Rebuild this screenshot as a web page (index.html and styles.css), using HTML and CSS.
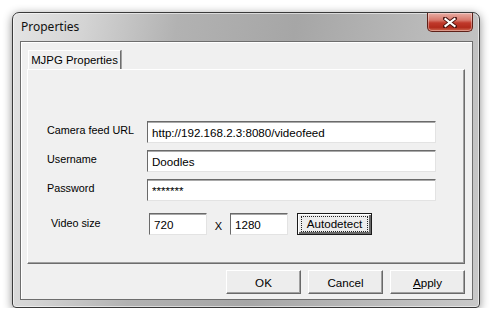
FILE: index.html
```html
<!DOCTYPE html>
<html lang="en">
<head>
    <meta charset="UTF-8">
    <title>Properties</title>
    <link rel="stylesheet" href="styles.css">
</head>
<body>

<div class="window">
    <div class="titlebar">
        <span class="title">Properties</span>
        <button class="close-btn" aria-label="Close">
            <svg width="14" height="11" viewBox="0 0 14 11">
                <path d="M2 1.5 L12 9.5 M12 1.5 L2 9.5" stroke="#4a1410" stroke-width="4" stroke-linecap="square"/>
                <path d="M2.5 2 L11.5 9 M11.5 2 L2.5 9" stroke="#fff" stroke-width="2.2" stroke-linecap="square"/>
            </svg>
        </button>
    </div>

    <div class="client">
        <div class="tabs">
            <div class="tab active">MJPG Properties</div>
        </div>

        <div class="panel">
            <div class="form">
                <label class="lbl">Camera feed URL</label>
                <input class="field" type="text" value="http://192.168.2.3:8080/videofeed">
                <label class="lbl">Username</label>
                <input class="field" type="text" value="Doodles">
                <label class="lbl">Password</label>
                <input class="field" type="text" value="*******">
            </div>

            <div class="size-row">
                <label class="lbl size-lbl">Video size</label>
                <input class="field small" type="text" value="720">
                <span class="times">X</span>
                <input class="field small" type="text" value="1280">
                <button class="btn focused"><span class="focus-ring">Autodetect</span></button>
            </div>
        </div>

        <div class="actions">
            <button class="btn wide">OK</button>
            <button class="btn wide">Cancel</button>
            <button class="btn wide"><u>A</u>pply</button>
        </div>
    </div>
</div>

</body>
</html>
```

FILE: styles.css
```css
body {
    margin: 0;
    padding: 0;
    background-color: #ffffff;
    font-family: "Liberation Sans", Arial, sans-serif;
    font-size: 11px;
    color: #000;
}

.window {
    margin: 12px 0 0 12px;
    width: 468px;
    height: 296px;
    box-sizing: border-box;
    border: 1px solid #3a3a3a;
    border-radius: 7px 7px 4px 4px;
    background: linear-gradient(100deg, #e4e4e4 0%, #d4d4d4 14%, #b2b2b2 32%, #a6a6a6 55%, #b8b8b8 78%, #c9c9c9 100%);
    box-shadow: 0 2px 10px rgba(0, 0, 0, 0.45), inset 0 0 0 1px rgba(255, 255, 255, 0.55);
    padding: 0 6px 7px 7px;
    display: flex;
    flex-direction: column;
}

.titlebar {
    height: 28px;
    display: flex;
    justify-content: space-between;
    align-items: flex-start;
}

.title {
    font-family: "Noto Sans", "Open Sans", sans-serif;
    font-size: 12px;
    color: #111;
    margin-top: 5px;
    margin-left: 1px;
}

.close-btn {
    width: 46px;
    height: 19px;
    margin-top: 0;
    padding: 0;
    border: 1px solid #5e2018;
    border-top: none;
    border-radius: 0 0 5px 5px;
    background: linear-gradient(to bottom, #e8aea5 0%, #d7776a 40%, #c0392b 55%, #b22b1c 80%, #cf6a53 100%);
    box-shadow: inset 0 0 0 1px rgba(255, 255, 255, 0.35);
    display: flex;
    align-items: center;
    justify-content: center;
}

.client {
    flex: 1;
    background-color: #f0f0f0;
    border: 1px solid #6d6d6d;
    box-shadow: inset 1px 1px 0 #ffffff;
    padding: 8px 7px 0 6px;
    display: flex;
    flex-direction: column;
}

.tabs {
    display: flex;
    height: 19px;
    padding-left: 1px;
}

.tab {
    font-size: 11.4px;
    line-height: 18px;
    text-align: center;
    white-space: nowrap;
    border-top: 1px solid #ffffff;
    border-left: 1px solid #ffffff;
    border-right: 1px solid #6d6d6d;
    box-shadow: 1px 0 0 #a0a0a0;
    background-color: #f0f0f0;
    height: 19px;
    box-sizing: border-box;
    width: 93px;
    position: relative;
    z-index: 1;
    margin-bottom: -1px;
}

.panel {
    height: 195px;
    box-sizing: border-box;
    border-top: 1px solid #ffffff;
    border-left: 1px solid #ffffff;
    border-right: 1px solid #6d6d6d;
    border-bottom: 1px solid #6d6d6d;
    box-shadow: inset -1px -1px 0 #a0a0a0;
    padding: 51px 0 0 19px;
}

.form {
    display: grid;
    grid-template-columns: 100px 289px;
    row-gap: 7px;
    align-items: center;
}

.lbl {
    white-space: nowrap;
    font-size: 10.8px;
    margin-top: -5px;
}

.field {
    height: 22px;
    box-sizing: border-box;
    border: 1px solid;
    border-color: #6a6a6a #e3e3e3 #e3e3e3 #6a6a6a;
    box-shadow: inset 0 1px 0 #a9a9a9;
    background-color: #ffffff;
    font-family: "Liberation Sans", Arial, sans-serif;
    font-size: 11.6px;
    padding: 0 4px;
    color: #000;
    outline: none;
}

.size-row {
    display: flex;
    align-items: center;
    margin-top: 12px;
    padding-left: 4px;
}

.size-lbl {
    width: 98px;
    margin-top: -2px;
}

.field.small {
    width: 58px;
}

.times {
    width: 23px;
    text-align: center;
    margin-top: 4px;
}

.btn {
    height: 22px;
    box-sizing: border-box;
    background-color: #ededed;
    border: 1px solid;
    border-color: #ffffff #696969 #696969 #ffffff;
    box-shadow: inset -1px -1px 0 #a0a0a0;
    font-family: "Liberation Sans", Arial, sans-serif;
    font-size: 11.6px;
    color: #000;
    padding: 0;
}

.btn.focused {
    width: 75px;
    margin-left: 9px;
    border: 1px solid #1a1a1a;
    box-shadow: inset 1px 1px 0 #ffffff, inset -2px -2px 0 #696969;
    padding: 2px;
}

.focus-ring {
    display: block;
    border: 1px dotted #222;
    line-height: 14px;
    margin: 0 1px;
}

.actions {
    display: flex;
    justify-content: flex-end;
    gap: 7px;
    margin-top: 6px;
}

.btn.wide {
    width: 75px;
    height: 24px;
}
```
